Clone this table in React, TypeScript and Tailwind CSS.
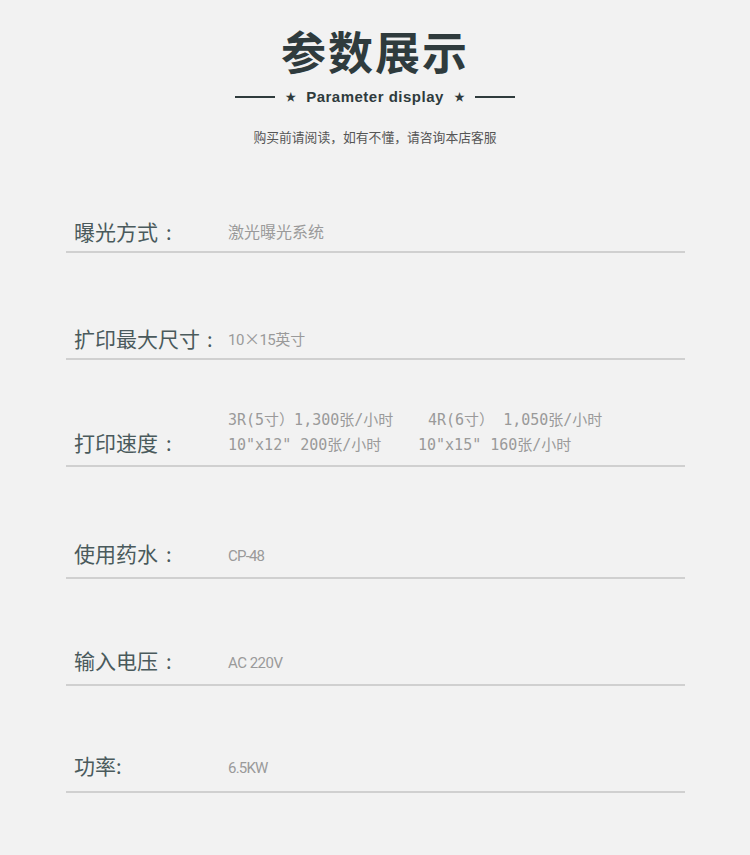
import React from "react";

const labelCls =
  "flex items-end text-[21px] leading-none text-[#4a5a5c] w-[154px] shrink-0 whitespace-nowrap";
const valueCls = "text-[15px] leading-none text-[#9a9a9a]";
const latin = { fontFamily: 'Roboto, "Noto Sans CJK SC", sans-serif' };

function Row({ h, pb, children }: { h: string; pb: string; children: React.ReactNode }) {
  return (
    <div className={`${h} border-b-2 border-[#d0d0d0] flex items-end pl-2 ${pb}`}>
      <div className="flex items-end w-full">{children}</div>
    </div>
  );
}

function Label({ text, colonMl = "ml-[8px]" }: { text: string; colonMl?: string }) {
  return (
    <span className={labelCls}>
      {text}
      <span className={`${colonMl} text-[20px]`}>:</span>
    </span>
  );
}

export default function App() {
  return (
    <div
      className="w-[750px] h-[855px] bg-[#f2f2f2] overflow-hidden"
      style={{ fontFamily: '"Noto Sans CJK SC", "Noto Sans", sans-serif' }}
    >
      <div className="flex flex-col items-center pt-[28px]">
        <h1 className="text-[45px] leading-none font-bold text-[#2f3b3d] tracking-[2px]">
          参数展示
        </h1>
        <div className="flex items-center mt-[16px] text-[#2f3b3d]">
          <div className="w-[40px] h-[2px] bg-[#2f3b3d]" />
          <span className="ml-[10px] text-[11px] leading-none">★</span>
          <span
            className="mx-[10px] text-[15px] font-bold leading-none tracking-[0.5px]"
            style={{ fontFamily: '"Liberation Sans", Arial, sans-serif' }}
          >
            Parameter display
          </span>
          <span className="mr-[10px] text-[11px] leading-none">★</span>
          <div className="w-[40px] h-[2px] bg-[#2f3b3d]" />
        </div>
        <p className="mt-[27px] text-[12.8px] leading-none text-[#555]">
          购买前请阅读，如有不懂，请咨询本店客服
        </p>
      </div>

      <div className="mx-[66px] mt-[4px] w-[619px]">
        <Row h="h-[105px]" pb="pb-[9px]">
          <Label text="曝光方式" />
          <span className={`${valueCls} text-[16px] mb-[3px]`}>激光曝光系统</span>
        </Row>
        <Row h="h-[107px]" pb="pb-[9px]">
          <Label text="扩印最大尺寸" colonMl="ml-[7px]" />
          <span className={`${valueCls} text-[14px] tracking-[-0.5px] mb-[1px]`} style={latin}>
            10
            <span className="text-[16px]" style={{ fontFamily: '"Noto Sans CJK SC", sans-serif' }}>
              ×
            </span>
            15
            <span className="text-[15px] tracking-normal" style={{ fontFamily: '"Noto Sans CJK SC", sans-serif' }}>
              英寸
            </span>
          </span>
        </Row>
        <Row h="h-[107px]" pb="pb-[12px]">
          <Label text="打印速度" />
          <div
            className={`${valueCls} flex flex-col gap-[10px]`}
            style={{ fontFamily: '"DejaVu Sans Mono", "Noto Sans CJK SC", monospace' }}
          >
            <div className="flex whitespace-pre">
              <span className="w-[200px]">3R(5寸）1,300张/小时</span>
              <span>4R(6寸） 1,050张/小时</span>
            </div>
            <div className="flex whitespace-pre">
              <span className="w-[190px]">10"x12" 200张/小时</span>
              <span>10"x15" 160张/小时</span>
            </div>
          </div>
        </Row>
        <Row h="h-[112px]" pb="pb-[13px]">
          <Label text="使用药水" />
          <span className={`${valueCls} text-[14px] tracking-[-0.8px]`} style={latin}>
            CP-48
          </span>
        </Row>
        <Row h="h-[107px]" pb="pb-[13px]">
          <Label text="输入电压" />
          <span className={`${valueCls} text-[14px] tracking-[-0.5px]`} style={latin}>
            AC 220V
          </span>
        </Row>
        <Row h="h-[107px]" pb="pb-[15px]">
          <Label text="功率" colonMl="ml-0" />
          <span className={`${valueCls} text-[14px] tracking-[-0.8px]`} style={latin}>
            6.5KW
          </span>
        </Row>
      </div>
    </div>
  );
}
